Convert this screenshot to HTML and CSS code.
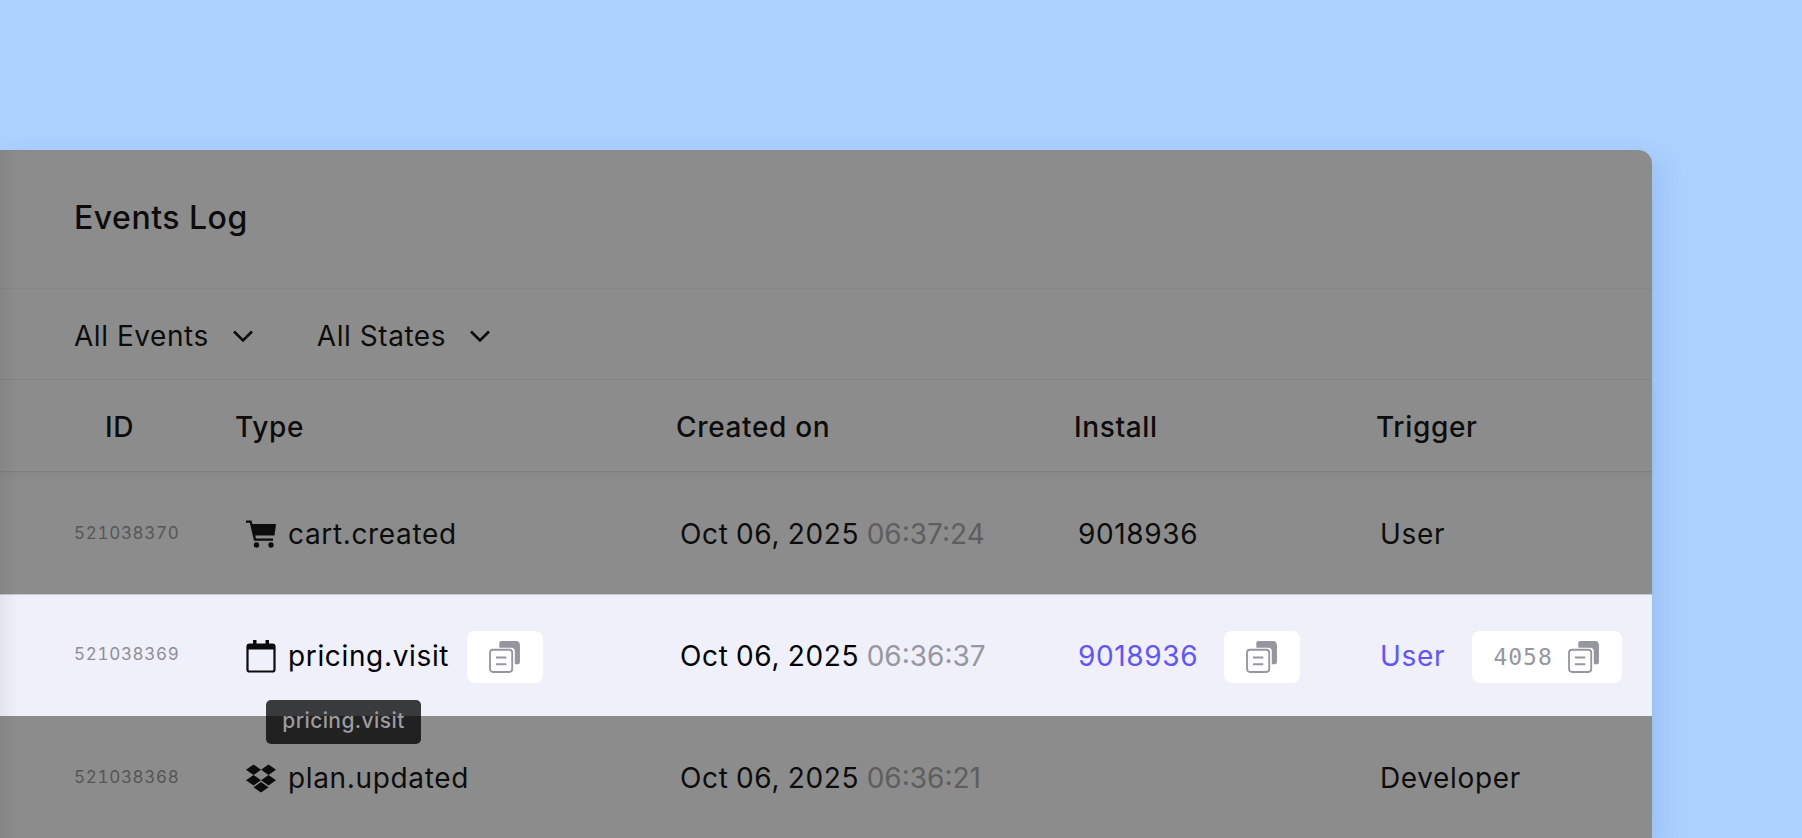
FILE: index.html
```html
<!DOCTYPE html>
<html lang="en">
<head>
    <meta charset="UTF-8">
    <meta name="viewport" content="width=device-width, initial-scale=1.0">
    <title>Events Log</title>
    <link rel="stylesheet" href="styles.css">
</head>
<body>
    <svg class="defs" width="0" height="0" aria-hidden="true">
        <symbol id="copy" viewBox="0 0 32 32">
            <path fill="#96969e" d="M12 1h14.500a4 4 0 0 1 3.500 3.500V21a2.500 2.500 0 0 1-2.500 2.500H25V11a3.500 3.500 0 0 0-3.500-3.500H10V3a2 2 0 0 1 2-2z"/>
            <rect x="1" y="9.500" width="21.500" height="21.500" rx="2.800" fill="#fff" stroke="#96969e" stroke-width="1.800"/>
            <path fill="none" stroke="#96969e" stroke-width="1.800" d="M6.800 17h10M6.800 23.500h10"/>
        </symbol>
    </svg>

    <div class="card">
        <div class="left-shade"></div>

        <div class="card-title">Events Log</div>

        <div class="filters">
            <div class="filter"><span>All Events</span>
                <svg width="24" height="14" viewBox="0 0 24 14"><path fill="none" stroke="#0c0c0c" stroke-width="2.600" d="M3 2.500l9 9 9-9"/></svg>
            </div>
            <div class="filter"><span>All States</span>
                <svg width="24" height="14" viewBox="0 0 24 14"><path fill="none" stroke="#0c0c0c" stroke-width="2.600" d="M3 2.500l9 9 9-9"/></svg>
            </div>
        </div>

        <div class="table-row table-head">
            <div class="head-id">ID</div>
            <div>Type</div>
            <div>Created on</div>
            <div>Install</div>
            <div>Trigger</div>
        </div>

        <div class="table-row event">
            <div class="event-id">521038370</div>
            <div class="cell type-cell">
                <svg class="type-icon" width="30" height="28" viewBox="0 0 30 28"><path fill="#0c0c0c" d="M0 .500h5.500l.9 3.500H30l-1.500 11.500H9.300l.6 3H27v2.300H8L3.800 2.800H0z"/><circle cx="10.500" cy="25" r="2.700" fill="#0c0c0c"/><circle cx="25" cy="25" r="2.700" fill="#0c0c0c"/></svg>
                <span>cart.created</span>
            </div>
            <div class="cell date-cell"><span>Oct 06, 2025 <span class="time">06:37:24</span></span></div>
            <div class="cell"><span>9018936</span></div>
            <div class="cell"><span>User</span></div>
        </div>

        <div class="table-row event active">
            <div class="event-id">521038369</div>
            <div class="cell type-cell">
                <svg class="type-icon" width="30" height="34" viewBox="0 0 30 34"><path fill="none" stroke="#0c0c0c" stroke-width="2.200" d="M3.500 5.500h23a2 2 0 0 1 2 2v23a2 2 0 0 1-2 2h-23a2 2 0 0 1-2-2v-23a2 2 0 0 1 2-2z"/><path fill="#0c0c0c" d="M1.500 5h27v5.500h-27zM7 1h3.500v6H7zM19.500 1H23v6h-3.500z"/></svg>
                <span>pricing.visit</span>
                <button class="copy-btn type-copy"><svg width="33" height="33"><use href="#copy"/></svg></button>
                <div class="tooltip">pricing.visit</div>
            </div>
            <div class="cell date-cell"><span>Oct 06, 2025 <span class="time">06:36:37</span></span></div>
            <div class="cell"><span class="link">9018936</span>
                <button class="copy-btn"><svg width="33" height="33"><use href="#copy"/></svg></button>
            </div>
            <div class="cell"><span class="link">User</span>
                <button class="copy-btn copy-value"><span>4058</span><svg width="33" height="33"><use href="#copy"/></svg></button>
            </div>
        </div>

        <div class="table-row event">
            <div class="event-id">521038368</div>
            <div class="cell type-cell">
                <svg class="type-icon" width="30" height="33" viewBox="0 0 24 24" preserveAspectRatio="none"><path fill="#0c0c0c" d="M6 1.800L0 5.600l6 3.850 6-3.850zM18 1.800l-6 3.800 6 3.850 6-3.850zM0 13.300l6 3.800 6-3.800-6-3.850zM18 9.450l-6 3.850 6 3.800 6-3.800zM6 18.400l6 3.800 6-3.800-6-3.850z"/></svg>
                <span>plan.updated</span>
            </div>
            <div class="cell date-cell"><span>Oct 06, 2025 <span class="time">06:36:21</span></span></div>
            <div class="cell"></div>
            <div class="cell"><span>Developer</span></div>
        </div>
    </div>
</body>
</html>
```

FILE: styles.css
```css
html, body {
    height: 838px;
    margin: 0;
    overflow: hidden;
}

body {
    background-color: #acd1ff;
    font-family: Inter, "Noto Sans", sans-serif;
    color: #0c0c0c;
    padding-top: 150px;
    box-sizing: border-box;
}

.defs {
    display: block;
    height: 0;
}

.card {
    position: relative;
    width: 1652px;
    background-color: #8c8c8c;
    border-radius: 0 14px 0 0;
    box-shadow: 8px 10px 26px rgba(40, 80, 150, 0.14);
}

.left-shade {
    position: absolute;
    top: 0;
    left: 0;
    bottom: 0;
    width: 18px;
    background: linear-gradient(to right, rgba(0, 0, 0, 0.05), rgba(0, 0, 0, 0));
}

.card-title {
    height: 139px;
    padding-left: 74px;
    padding-bottom: 4px;
    display: flex;
    align-items: center;
    box-sizing: border-box;
    font-size: 32px;
    font-weight: 500;
    letter-spacing: 0.5px;
    border-bottom: 1px solid #858585;
}

.filters {
    height: 91px;
    padding-left: 74px;
    padding-top: 3px;
    display: flex;
    align-items: center;
    gap: 62px;
    box-sizing: border-box;
    font-size: 28px;
    letter-spacing: 0.55px;
    border-bottom: 1px solid #858585;
}

.filter {
    display: flex;
    align-items: center;
    gap: 22px;
}

.table-row {
    display: grid;
    grid-template-columns: 161px 441px 398px 302px 1fr;
    padding-left: 74px;
    align-items: center;
    box-sizing: border-box;
    font-size: 28px;
    letter-spacing: 0.65px;
}

.table-head {
    height: 92px;
    padding-top: 2px;
    font-weight: 500;
    border-bottom: 1px solid #808080;
    box-shadow: 0 3px 6px rgba(0, 0, 0, 0.04);
}

.head-id {
    padding-left: 31px;
}

.event {
    height: 122px;
    padding-top: 2px;
}

.event-id {
    font-size: 17px;
    font-variant-numeric: tabular-nums;
    letter-spacing: 0.700px;
    color: #565656;
    margin-top: -2px;
}

.cell {
    position: relative;
    display: flex;
    align-items: center;
    padding-left: 4px;
    white-space: nowrap;
}

.date-cell {
    word-spacing: -1px;
}

.type-cell {
    padding-left: 11px;
}

.type-icon {
    flex: none;
    margin-right: 12px;
}

.time {
    color: #5e5e5e;
    letter-spacing: 0;
}

.active {
    padding-top: 0;
    background-color: #eff0fa;
    border-top: 1px solid #c6c6d6;
    color: #000;
}

.active .event-id {
    color: #8e8e96;
    margin-top: -3px;
}

.active .time {
    color: #97979f;
}

.link {
    color: #5f54ff;
}

.copy-btn {
    display: flex;
    align-items: center;
    justify-content: center;
    gap: 15px;
    flex: none;
    width: 76px;
    height: 52px;
    margin-top: 2px;
    margin-left: 26px;
    padding: 0;
    border: none;
    border-radius: 8px;
    background-color: #fff;
}

.type-copy {
    margin-left: 18px;
}

.copy-value {
    width: 150px;
    margin-left: 27px;
    font-family: "DejaVu Sans Mono", monospace;
    font-size: 23px;
    letter-spacing: 1px;
    color: #96969e;
}

.tooltip {
    position: absolute;
    top: 71px;
    left: 31px;
    width: 155px;
    height: 44px;
    border-radius: 5px;
    background-color: rgba(0, 0, 0, 0.76);
    color: #9c9c9f;
    font-size: 21px;
    font-weight: 500;
    letter-spacing: 0.4px;
    line-height: 42px;
    text-align: center;
    z-index: 2;
}
```
